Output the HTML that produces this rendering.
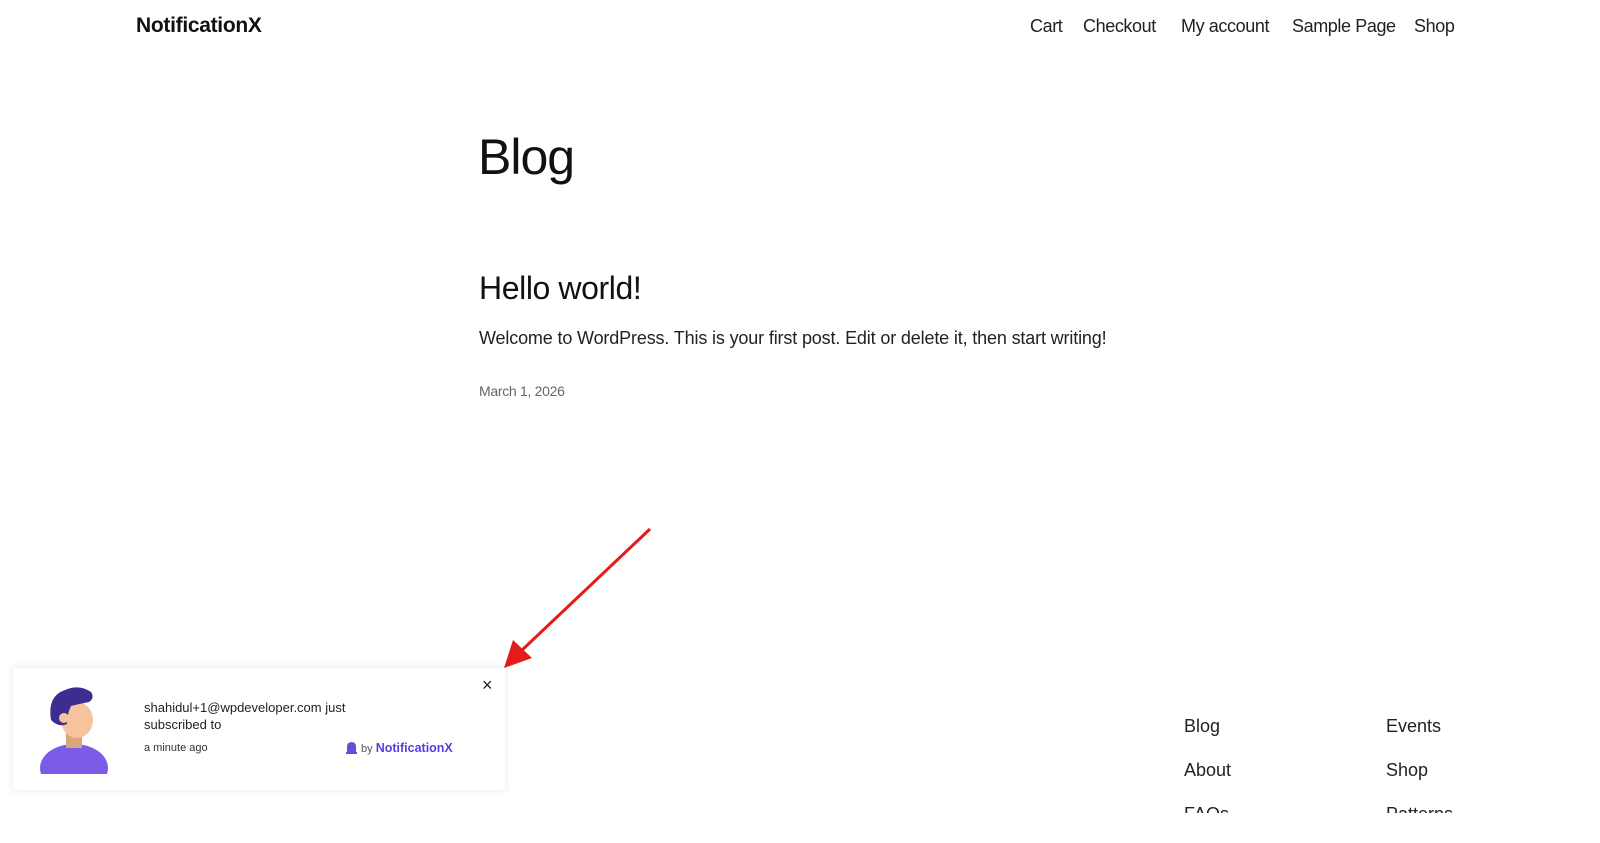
<!DOCTYPE html>
<html><head><style>
body{margin:0;width:1600px;height:838px;background:#fff;font-family:"Liberation Sans",sans-serif;color:#111;position:relative;overflow:hidden}
.a{position:absolute;white-space:nowrap}
</style></head><body>
<div class="a" style="left:136px;top:14px;font-size:21px;font-weight:bold;letter-spacing:-0.3px">NotificationX</div>
<div class="a" style="left:1030px;top:16px;font-size:18px;color:#222;letter-spacing:-0.4px">Cart</div>
<div class="a" style="left:1083px;top:16px;font-size:18px;color:#222;letter-spacing:-0.4px">Checkout</div>
<div class="a" style="left:1181px;top:16px;font-size:18px;color:#222;letter-spacing:-0.4px">My account</div>
<div class="a" style="left:1292px;top:16px;font-size:18px;color:#222;letter-spacing:-0.4px">Sample Page</div>
<div class="a" style="left:1414px;top:16px;font-size:18px;color:#222;letter-spacing:-0.4px">Shop</div>
<div class="a" style="left:478px;top:128px;font-size:50px;letter-spacing:-1px">Blog</div>
<div class="a" style="left:479px;top:270px;font-size:32px;letter-spacing:-0.4px">Hello world!</div>
<div class="a" style="left:479px;top:328px;font-size:18px;color:#222;letter-spacing:-0.15px">Welcome to WordPress. This is your first post. Edit or delete it, then start writing!</div>
<div class="a" style="left:479px;top:383px;font-size:14px;color:#666;letter-spacing:-0.3px">March 1, 2026</div>
<div class="a" style="left:1184px;top:716px;font-size:18px;color:#222">Blog</div>
<div class="a" style="left:1386px;top:716px;font-size:18px;color:#222">Events</div>
<div class="a" style="left:1184px;top:760px;font-size:18px;color:#222">About</div>
<div class="a" style="left:1386px;top:760px;font-size:18px;color:#222">Shop</div>
<div class="a" style="left:1184px;top:804px;font-size:18px;color:#222">FAQs</div>
<div class="a" style="left:1386px;top:804px;font-size:18px;color:#222">Patterns</div>
<div style="position:absolute;left:0;top:813px;width:1600px;height:30px;background:#fff;z-index:2"></div>
<svg style="position:absolute;left:0;top:0" width="1600" height="838"><line x1="650" y1="529" x2="520" y2="652" stroke="#e41b1b" stroke-width="3"/><polygon points="504,668 513,640 532,658" fill="#e41b1b"/></svg>
<div style="position:absolute;left:13px;top:668px;width:492px;height:122px;background:#fff;box-shadow:0 0 8px rgba(0,0,0,0.1);z-index:3">
<svg style="position:absolute;left:26px;top:16px" width="70" height="90" viewBox="0 0 70 90">
<ellipse cx="35" cy="84" rx="34" ry="24" fill="#7b5ce8"/>
<rect x="27" y="44" width="16" height="20" fill="#d9a77e"/>
<ellipse cx="38" cy="36" rx="16" ry="18" fill="#f6c49c"/>
<path d="M12 36 Q8 12 26 6 Q40 0 52 8 Q56 14 50 18 Q40 20 32 22 Q28 30 28 40 Q20 44 12 36Z" fill="#3b2e8f"/>
<circle cx="25" cy="34" r="5" fill="#f6c49c"/>
</svg>
<div class="a" style="left:131px;top:31px;font-size:13px;color:#222;line-height:17px">shahidul+1@wpdeveloper.com just<br>subscribed to</div>
<div class="a" style="left:131px;top:74px;font-size:11px;color:#333">a minute ago</div>
<svg style="position:absolute;left:333px;top:74px" width="11" height="12" viewBox="0 0 11 12"><path d="M1 10 L1 5 Q1 0 5.5 0 Q10 0 10 5 L10 10Z" fill="#6a4bdc"/><rect x="0" y="10" width="11" height="2" fill="#6a4bdc"/></svg>
<div class="a" style="left:348px;top:73px;font-size:11px;color:#555">by <span style="color:#5a3de0;font-size:12.5px;font-weight:bold">NotificationX</span></div>
<div class="a" style="left:469px;top:7px;font-size:18px;color:#222">×</div>
</div>
</body></html>
